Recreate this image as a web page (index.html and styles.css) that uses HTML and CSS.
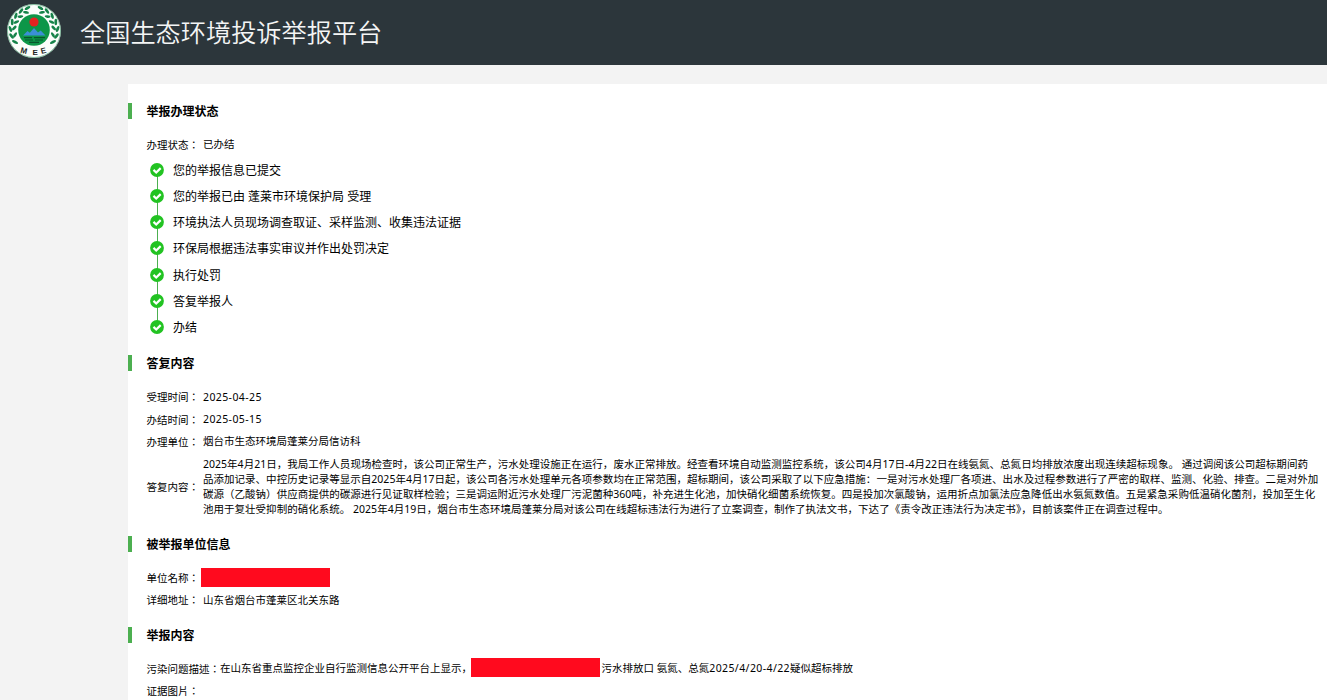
FILE: index.html
```
<!DOCTYPE html>
<html>
<head>
    <meta charset="UTF-8">
    <meta name="viewport" content="width=device-width, initial-scale=1.0">
    <title>全国生态环境投诉举报平台</title>
    <link rel="stylesheet" href="styles.css">
</head>
<body>
<svg width="0" height="0" class="defs">
    <symbol id="check" viewBox="0 0 14 14">
        <circle cx="7" cy="7" r="6.9" fill="#22c322"/>
        <path d="M3.5 6.9l2.7 2.6 4.5-4.4" fill="none" stroke="#fff" stroke-width="2.2"/>
    </symbol>
    <symbol id="leaves" viewBox="0 0 54 54">
        <g fill="#16834a">
            <ellipse cx="8" cy="38" rx="1.5" ry="3.3" transform="rotate(-65 8 38)"/>
            <ellipse cx="4.5" cy="32" rx="1.4" ry="3.2" transform="rotate(-35 4.5 32)"/>
            <ellipse cx="8" cy="31" rx="1.3" ry="3" transform="rotate(35 8 31)"/>
            <ellipse cx="3.4" cy="25" rx="1.4" ry="3.2" transform="rotate(-20 3.4 25)"/>
            <ellipse cx="7.3" cy="24" rx="1.3" ry="3" transform="rotate(45 7.3 24)"/>
            <ellipse cx="5.2" cy="18" rx="1.4" ry="3.2"/>
            <ellipse cx="9.4" cy="18" rx="1.3" ry="3" transform="rotate(65 9.4 18)"/>
            <ellipse cx="8.8" cy="11.8" rx="1.4" ry="3.2" transform="rotate(15 8.8 11.8)"/>
            <ellipse cx="13.4" cy="12.6" rx="1.3" ry="3" transform="rotate(85 13.4 12.6)"/>
            <ellipse cx="14" cy="7" rx="1.4" ry="3.2" transform="rotate(35 14 7)"/>
            <ellipse cx="19" cy="8.4" rx="1.3" ry="3" transform="rotate(100 19 8.4)"/>
            <ellipse cx="20.5" cy="4" rx="1.4" ry="3.2" transform="rotate(60 20.5 4)"/>
        </g>
    </symbol>
</svg>

<div class="header">
    <svg class="logo" viewBox="0 0 54 54">
        <circle cx="27" cy="27" r="27" fill="#fbfdfb"/>
        <circle cx="27" cy="27" r="26.5" fill="none" stroke="#16834a" stroke-width=".5"/>
        <use href="#leaves" width="54" height="54"/>
        <use href="#leaves" width="54" height="54" transform="matrix(-1 0 0 1 54 0)"/>
        <circle cx="27" cy="26" r="17" fill="#fbfdfb"/>
        <circle cx="27" cy="26" r="15.8" fill="#0d9648"/>
        <circle cx="27" cy="18" r="4.6" fill="#e42320"/>
        <path d="M16 31.6l4.5-4.5 2.3 1.6 4.2-4.6 4 4.4 2.7-2 4.8 5.1z" fill="#3b8fd6"/>
        <path d="M17 33.6h8M27 33.6h11M18 36h8M28 36h8M22 38.4h10" stroke="#07562c" stroke-width="1.1"/>
        <g class="logo-text">
            <text x="13.6" y="49.4" transform="rotate(14 17 47)">M</text>
            <text x="25.6" y="51.2">E</text>
            <text x="33.8" y="49.6" transform="rotate(-14 36 47)">E</text>
        </g>
    </svg>
    <h1>全国生态环境投诉举报平台</h1>
</div>

<div class="container">
    <h2>举报办理状态</h2>
    <div class="row">
        <div class="label">办理状态：</div>
        <div class="value">已办结</div>
    </div>
    <ul class="steps">
        <li><svg><use href="#check"/></svg>您的举报信息已提交</li>
        <li><svg><use href="#check"/></svg>您的举报已由 蓬莱市环境保护局 受理</li>
        <li><svg><use href="#check"/></svg>环境执法人员现场调查取证、采样监测、收集违法证据</li>
        <li><svg><use href="#check"/></svg>环保局根据违法事实审议并作出处罚决定</li>
        <li><svg><use href="#check"/></svg>执行处罚</li>
        <li><svg><use href="#check"/></svg>答复举报人</li>
        <li><svg><use href="#check"/></svg>办结</li>
    </ul>

    <h2>答复内容</h2>
    <div class="row">
        <div class="label">受理时间：</div>
        <div class="value date">2025-04-25</div>
    </div>
    <div class="row">
        <div class="label">办结时间：</div>
        <div class="value date">2025-05-15</div>
    </div>
    <div class="row">
        <div class="label">办理单位：</div>
        <div class="value">烟台市生态环境局蓬莱分局信访科</div>
    </div>
    <div class="row reply">
        <div class="label">答复内容：</div>
        <div class="value">
            2025年4月21日，我局工作人员现场检查时，该公司正常生产，污水处理设施正在运行，废水正常排放。经查看环境自动监测监控系统，该公司4月17日-4月22日在线氨氮、总氮日均排放浓度出现连续超标现象。 通过调阅该公司超标期间药<br>
            品添加记录、中控历史记录等显示自2025年4月17日起，该公司各污水处理单元各项参数均在正常范围，超标期间，该公司采取了以下应急措施：一是对污水处理厂各项进、出水及过程参数进行了严密的取样、监测、化验、排查。二是对外加<br>
            碳源（乙酸钠）供应商提供的碳源进行见证取样检验；三是调运附近污水处理厂污泥菌种360吨，补充进生化池，加快硝化细菌系统恢复。四是投加次氯酸钠，运用折点加氯法应急降低出水氨氮数值。五是紧急采购低温硝化菌剂，投加至生化<br>
            池用于复壮受抑制的硝化系统。 2025年4月19日，烟台市生态环境局蓬莱分局对该公司在线超标违法行为进行了立案调查，制作了执法文书，下达了《责令改正违法行为决定书》，目前该案件正在调查过程中。
        </div>
    </div>

    <h2>被举报单位信息</h2>
    <div class="row">
        <div class="label">单位名称：</div>
        <div class="value"><span class="mask"></span></div>
    </div>
    <div class="row">
        <div class="label">详细地址：</div>
        <div class="value">山东省烟台市蓬莱区北关东路</div>
    </div>

    <h2>举报内容</h2>
    <div class="row">
        <span class="title">污染问题描述：</span>
        <span>在山东省重点监控企业自行监测信息公开平台上显示，</span>
        <span class="mask"></span>
        <span>污水排放口 氨氮、总氮<span class="date">2025/4/20-4/22</span>疑似超标排放</span>
    </div>
    <div class="row">
        <div class="label">证据图片：</div>
    </div>
</div>
</body>
</html>
```

FILE: styles.css
```
body {
    margin: 0;
    height: 700px;
    overflow: hidden;
    background-color: #f3f3f3;
    font-family: "Noto Sans", "Noto Sans CJK SC", sans-serif;
    font-size: 10.5px;
    color: #000;
}
.defs {
    display: block;
}
.header {
    display: flex;
    align-items: center;
    height: 65px;
    background-color: #2c363b;
}
.logo {
    width: 54px;
    height: 54px;
    margin: 0 19px 3px 7px;
}
.logo-text {
    font-family: "Liberation Sans", sans-serif;
    font-size: 8px;
    font-weight: bold;
    fill: #222;
}
h1 {
    margin: 0 0 4px;
    font-size: 25.2px;
    font-weight: 350;
    line-height: 36px;
    font-family: "Noto Sans CJK SC", sans-serif;
    color: #f4f5f5;
}
.container {
    box-sizing: border-box;
    height: 616px;
    margin: 19px 0 0 128px;
    padding-top: 19px;
    overflow: hidden;
    background-color: #fff;
}
h2 {
    box-sizing: border-box;
    height: 16px;
    margin: 15px 0;
    padding-left: 14.5px;
    border-left: 4px solid #4caf50;
    font-size: 12px;
    line-height: 18px;
}
h2:first-child {
    margin-top: 0;
}
.row {
    display: flex;
    align-items: center;
    box-sizing: border-box;
    height: 22.4px;
    padding: 0 0 1px 18.5px;
    line-height: 15px;
    white-space: nowrap;
}
.label, .title {
    font-family: "Noto Sans CJK TC", sans-serif;
    line-height: 14px;
}
.label {
    width: 56.5px;
}
.date {
    letter-spacing: 0.4px;
}
.reply {
    height: 67.6px;
}
.reply .value {
    letter-spacing: 0.02px;
}
.mask {
    display: block;
    width: 129px;
    height: 19px;
    margin: 0 1px 0 -2px;
    background-color: #ff0a1e;
}
.title ~ .mask {
    margin: 0 1.5px 2px -1px;
}
.steps {
    margin: 0 0 15px;
    padding: 0 0 0 22px;
    list-style: none;
    font-size: 12px;
}
.steps li {
    display: flex;
    align-items: center;
    height: 26.3px;
    background: linear-gradient(#4caf50, #4caf50) 7px 0 / 1px 100% no-repeat;
}
.steps li:first-child {
    background-position: 7px 13px;
}
.steps li:last-child {
    background-size: 1px 13px;
}
.steps svg {
    width: 14px;
    height: 14px;
    margin-right: 9px;
}
```
